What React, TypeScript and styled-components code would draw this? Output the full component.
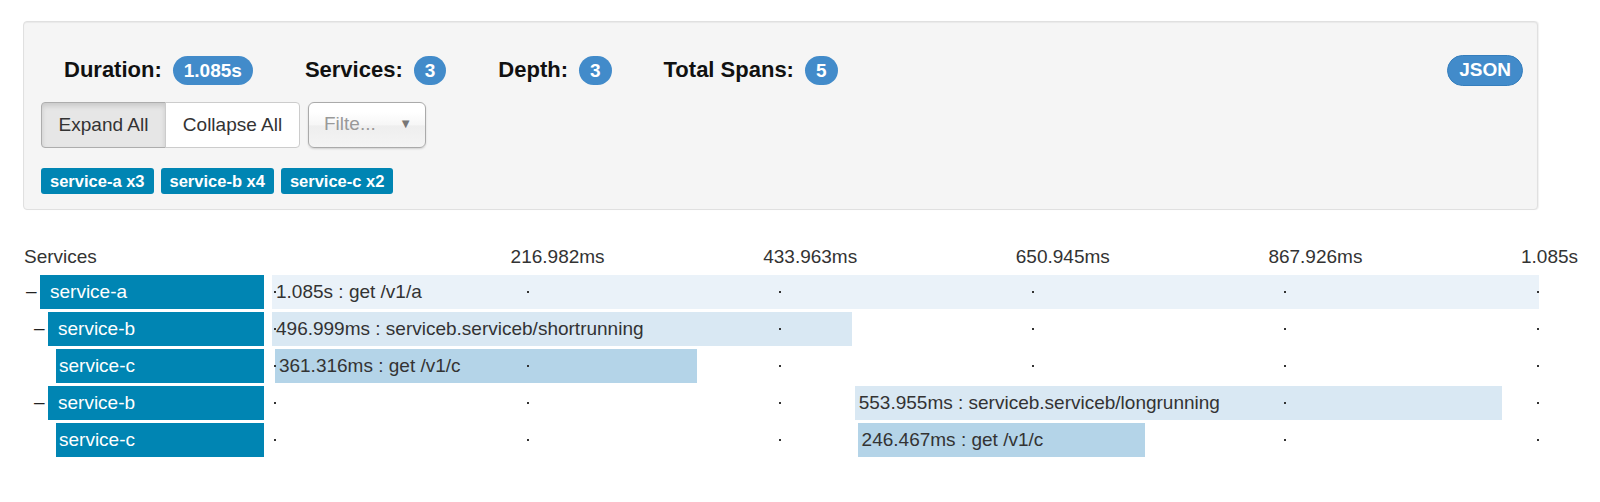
import styled, { createGlobalStyle } from 'styled-components';

const GlobalStyle = createGlobalStyle`
  body {
    margin: 0;
    background: #fff;
    color: #333;
    font-family: "Liberation Sans", Arial, sans-serif;
  }
`;

// scale of the trace timeline
const TRACK_WIDTH = 1267;
const TOTAL_MS = 1085;
const pxPerMs = TRACK_WIDTH / TOTAL_MS;

const barColors = ['#eaf2f9', '#d9e8f3', '#b4d4e8'];

// Styled Components
const Page = styled.div`
  padding-top: 21px;
`;

const Panel = styled.div`
  box-sizing: border-box;
  width: 1515px;
  margin-left: 23px;
  padding: 20px 14px 15px 17px;
  background: #f5f5f5;
  border: 1px solid #e0e0e0;
  border-radius: 4px;
  box-shadow: inset 0 1px 1px rgba(0, 0, 0, 0.05), 1px 0 1px rgba(0, 0, 0, 0.06);
`;

const TopRow = styled.div`
  display: flex;
  align-items: center;
  height: 56px;
  padding-left: 23px;
`;

const Stat = styled.div`
  display: flex;
  align-items: center;
  gap: 11px;
  margin-right: 52px;
`;

const StatLabel = styled.span`
  font-size: 22px;
  font-weight: bold;
  color: #111;
`;

const Badge = styled.span`
  display: inline-block;
  height: 29px;
  line-height: 29px;
  padding: 0 11px;
  border-radius: 15px;
  background: #428bca;
  color: #fff;
  font-size: 19px;
  font-weight: bold;
`;

const JsonButton = styled.button`
  margin-left: auto;
  height: 31px;
  padding: 0 11px;
  border: 1px solid #357ebd;
  border-radius: 16px;
  background: #428bca;
  color: #fff;
  font-family: inherit;
  font-size: 19px;
  font-weight: bold;
`;

const Controls = styled.div`
  display: flex;
  gap: 8px;
  margin-top: 4px;
`;

const ButtonGroup = styled.div`
  display: flex;
`;

const ToggleButton = styled.button<{ $active?: boolean; $width: number }>`
  width: ${(p) => p.$width}px;
  height: 46px;
  padding: 0;
  font-family: inherit;
  font-size: 19px;
  color: #333;
  background: ${(p) => (p.$active ? '#e6e6e6' : '#fff')};
  border: 1px solid ${(p) => (p.$active ? '#adadad' : '#ccc')};
  box-shadow: ${(p) => (p.$active ? 'inset 0 3px 5px rgba(0, 0, 0, 0.125)' : 'none')};
  border-radius: ${(p) => (p.$active ? '4px 0 0 4px' : '0 4px 4px 0')};
  margin-left: ${(p) => (p.$active ? '0' : '-1px')};
`;

const FilterSelect = styled.div`
  box-sizing: border-box;
  display: flex;
  align-items: center;
  justify-content: space-between;
  width: 118px;
  height: 46px;
  padding: 0 13px 3px 15px;
  border: 1px solid #aaa;
  border-radius: 6px;
  background: linear-gradient(#fff 20%, #f6f6f6 50%, #eee 52%, #f4f4f4 100%);
  box-shadow: 0 1px 2px rgba(0, 0, 0, 0.15);
  color: #999;
  font-size: 19px;

  .caret {
    font-size: 13px;
    color: #777;
  }
`;

const TagRow = styled.div`
  display: flex;
  gap: 7px;
  margin-top: 20px;
`;

const Tag = styled.span`
  height: 26px;
  line-height: 26px;
  padding: 0 9px;
  border-radius: 3px;
  background: #0085b3;
  color: #fff;
  font-size: 16.5px;
  font-weight: bold;
`;

const Timeline = styled.div`
  margin: 32px 0 0 24px;
`;

const Grid = styled.div`
  display: grid;
  grid-template-columns: 240px ${TRACK_WIDTH}px;
  column-gap: 8px;
`;

const HeaderRow = styled(Grid)`
  height: 30px;
  line-height: 30px;
  font-size: 19px;
  color: #333;
`;

const Axis = styled.div`
  position: relative;
`;

const AxisLabel = styled.span`
  position: absolute;
  top: 0;
  white-space: nowrap;
`;

const Row = styled(Grid)`
  height: 34px;
  margin-top: 3px;
`;

const LabelCell = styled.div<{ $depth: number }>`
  display: flex;
  align-items: center;
  padding-left: ${(p) => p.$depth * 8}px;
`;

const Expander = styled.span`
  flex: none;
  width: 14px;
  padding-left: 2px;
  margin-top: -3px;
  font-size: 19px;
  color: #222;
`;

const NameBox = styled.div<{ $leaf?: boolean }>`
  flex: 1;
  height: 34px;
  line-height: 34px;
  padding-left: ${(p) => (p.$leaf ? 3 : 10)}px;
  background: #0085b3;
  color: #fff;
  font-size: 19px;
`;

const Track = styled.div`
  position: relative;
  height: 34px;
`;

const Bar = styled.div<{ $color: string }>`
  position: absolute;
  top: 0;
  bottom: 0;
  background: ${(p) => p.$color};
`;

const Tick = styled.span`
  position: absolute;
  top: 16px;
  width: 2px;
  height: 2px;
  background: #333;
`;

const BarLabel = styled.span<{ $color: string }>`
  position: absolute;
  top: 0;
  line-height: 34px;
  font-size: 19px;
  color: #333;
  white-space: nowrap;
  background: ${(p) => p.$color};
`;

const tickX = (i: number) => 2 + i * ((TRACK_WIDTH - 4) / 5);

const spans = [
  { service: 'service-a', depth: 0, children: true, start: 0, duration: 1085, label: '1.085s : get /v1/a' },
  { service: 'service-b', depth: 1, children: true, start: 0, duration: 496.999, label: '496.999ms : serviceb.serviceb/shortrunning' },
  { service: 'service-c', depth: 2, children: false, start: 2.5, duration: 361.316, label: '361.316ms : get /v1/c' },
  { service: 'service-b', depth: 1, children: true, start: 499, duration: 553.955, label: '553.955ms : serviceb.serviceb/longrunning' },
  { service: 'service-c', depth: 2, children: false, start: 501.5, duration: 246.467, label: '246.467ms : get /v1/c' },
];

const stats = [
  { label: 'Duration:', value: '1.085s' },
  { label: 'Services:', value: '3' },
  { label: 'Depth:', value: '3' },
  { label: 'Total Spans:', value: '5' },
];

const markers = ['216.982ms', '433.963ms', '650.945ms', '867.926ms', '1.085s'];

const App = () => {
  return (
    <Page>
      <GlobalStyle />
      <Panel>
        <TopRow>
          {stats.map((s) => (
            <Stat key={s.label}>
              <StatLabel>{s.label}</StatLabel>
              <Badge>{s.value}</Badge>
            </Stat>
          ))}
          <JsonButton>JSON</JsonButton>
        </TopRow>
        <Controls>
          <ButtonGroup>
            <ToggleButton $active $width={125}>Expand All</ToggleButton>
            <ToggleButton $width={135}>Collapse All</ToggleButton>
          </ButtonGroup>
          <FilterSelect>
            <span>Filte...</span>
            <span className="caret">▼</span>
          </FilterSelect>
        </Controls>
        <TagRow>
          <Tag>service-a x3</Tag>
          <Tag>service-b x4</Tag>
          <Tag>service-c x2</Tag>
        </TagRow>
      </Panel>

      <Timeline>
        <HeaderRow>
          <span>Services</span>
          <Axis>
            {markers.map((m, i) => (
              <AxisLabel key={m} style={{ left: tickX(i + 1) - 16 }}>{m}</AxisLabel>
            ))}
          </Axis>
        </HeaderRow>

        {spans.map((span, index) => {
          const left = span.start * pxPerMs;
          const width = span.duration * pxPerMs;
          const color = barColors[span.depth];
          return (
            <Row key={index}>
              <LabelCell $depth={span.depth}>
                <Expander>{span.children ? '–' : ''}</Expander>
                <NameBox $leaf={!span.children}>{span.service}</NameBox>
              </LabelCell>
              <Track>
                <Bar $color={color} style={{ left, width }} />
                {[0, 1, 2, 3, 4, 5].map((i) => (
                  <Tick key={i} style={{ left: tickX(i) }} />
                ))}
                <BarLabel $color={color} style={{ left: left + 4 }}>{span.label}</BarLabel>
              </Track>
            </Row>
          );
        })}
      </Timeline>
    </Page>
  );
};

export default App;
